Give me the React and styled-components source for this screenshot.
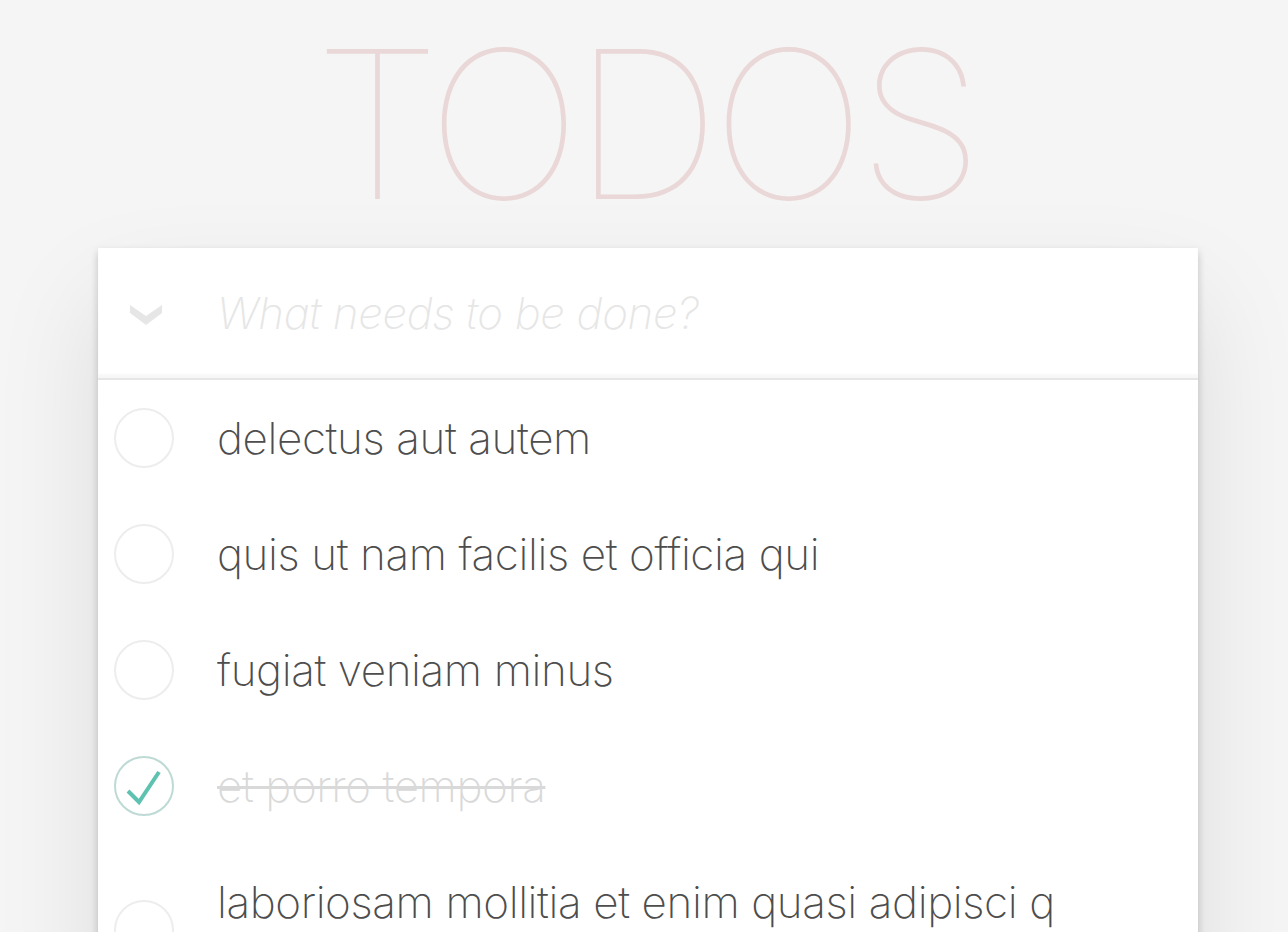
import styled, { createGlobalStyle } from "styled-components";

const GlobalStyle = createGlobalStyle`
  html, body {
    margin: 0;
    padding: 0;
    overflow: hidden;
  }
  body {
    background: #f5f5f5;
    color: #4d4d4d;
    font-family: Inter, "Liberation Sans", sans-serif;
    font-weight: 250;
    -webkit-font-smoothing: antialiased;
  }
`;

const todos = [
  { id: 1, title: "delectus aut autem", completed: false },
  { id: 2, title: "quis ut nam facilis et officia qui", completed: false },
  { id: 3, title: "fugiat veniam minus", completed: false },
  { id: 4, title: "et porro tempora", completed: true },
  { id: 5, title: "laboriosam mollitia et enim quasi adipisci quia provident illum", completed: false },
];

const Page = styled.div`
  height: 932px;
  padding: 0 90px 0 98px;
  overflow: hidden;
`;

const Title = styled.h1`
  margin: 0;
  padding-left: 0;
  font-size: 206px;
  line-height: 248px;
  font-weight: 100;
  letter-spacing: -8px;
  text-indent: -6px;
  text-align: center;
  color: rgba(175, 47, 47, 0.15);
`;

const Card = styled.section`
  background: #fff;
  box-shadow: 0 4px 8px 0 rgba(0, 0, 0, 0.2), 0 50px 100px 0 rgba(0, 0, 0, 0.1);
`;

const Header = styled.header`
  display: flex;
  align-items: center;
  height: 130px;
  box-shadow: inset 0 -4px 2px rgba(0, 0, 0, 0.03);
`;

const ToggleAll = styled.button`
  display: flex;
  align-items: center;
  justify-content: flex-start;
  width: 119px;
  height: 100%;
  padding: 4px 0 0 32px;
  border: none;
  background: none;
  flex-shrink: 0;
`;

const NewTodo = styled.input`
  flex: 1;
  height: 100%;
  padding: 0;
  border: none;
  outline: none;
  background: transparent;
  font-family: inherit;
  font-size: 44px;
  letter-spacing: -0.4px;
  font-weight: 250;
  color: #4d4d4d;

  &::placeholder {
    font-style: italic;
    font-weight: 250;
    color: #e6e6e6;
  }
`;

const List = styled.ul`
  margin: 0;
  padding: 0;
  list-style: none;
  border-top: 2px solid #e6e6e6;
`;

const Row = styled.li`
  display: flex;
  align-items: center;
`;

const Toggle = styled.span`
  display: block;
  width: 60px;
  height: 60px;
  margin-left: 16px;
  flex-shrink: 0;
`;

const Label = styled.label`
  flex: 1;
  padding: 30px 120px 30px 43px;
  font-size: 44px;
  letter-spacing: -0.4px;
  line-height: 56px;
  word-break: break-all;
  color: ${(p) => (p.$done ? "#d9d9d9" : "#4d4d4d")};
  text-decoration: ${(p) => (p.$done ? "line-through" : "none")};
  text-decoration-thickness: 3px;
`;

const Chevron = () => (
  <svg width="32" height="20" viewBox="0 0 32 20">
    <polygon points="0,0 16,11 32,0 32,8 16,20 0,8" fill="#e6e6e6" />
  </svg>
);

const Check = ({ done }) => (
  <svg width="60" height="60" viewBox="0 0 60 60">
    <circle cx="30" cy="30" r="29" fill="none" stroke={done ? "#bddad5" : "#ededed"} strokeWidth="2" />
    {done && (
      <polyline points="14,35 25,46 45,16" fill="none" stroke="#5dc2af" strokeWidth="4" />
    )}
  </svg>
);

export default function App() {
  return (
    <>
      <GlobalStyle />
      <Page>
        <Title>TODOS</Title>
        <Card>
          <Header>
            <ToggleAll aria-label="Mark all as complete">
              <Chevron />
            </ToggleAll>
            <NewTodo placeholder="What needs to be done?" />
          </Header>
          <List>
            {todos.map((t) => (
              <Row key={t.id}>
                <Toggle>
                  <Check done={t.completed} />
                </Toggle>
                <Label $done={t.completed}>{t.title}</Label>
              </Row>
            ))}
          </List>
        </Card>
      </Page>
    </>
  );
}
